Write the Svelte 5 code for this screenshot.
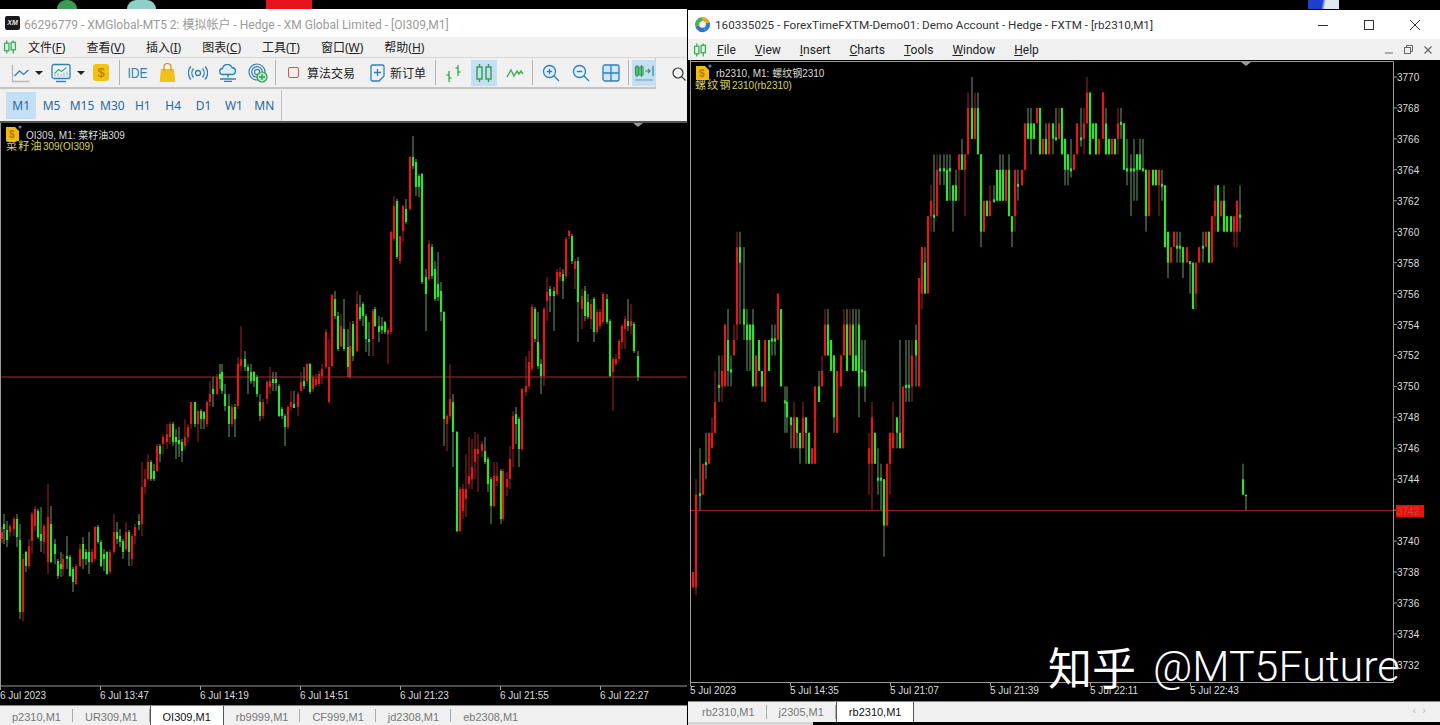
<script>
	// bars: [x, up?, bodyTop, bodyBottom, high, low]; left chart is in page pixels
	const oiBars = [
		[2,1,533,540,528,544],[4,0,525,530,515,545],[7,0,531,541,522,548],[10,1,527,533,525,538],[14,1,520,530,518,537],
		[17,0,520,538,515,548],[20,0,541,613,525,620],[23,1,560,613,555,622],[26,0,553,567,552,573],[29,1,547,567,540,570],
		[32,1,515,542,513,555],[35,1,510,527,507,532],[38,0,512,538,510,540],[41,0,535,542,508,553],[44,1,527,543,525,555],
		[48,1,518,563,485,575],[51,0,525,563,507,564],[55,0,545,555,540,565],[58,0,562,577,560,580],[61,0,565,570,553,578],
		[63,1,560,570,555,577],[67,0,557,560,537,570],[70,0,558,577,556,578],[73,0,570,583,568,593],[76,1,567,585,565,586],
		[80,1,550,567,545,568],[83,0,545,560,538,570],[86,0,553,560,550,566],[89,0,553,563,533,575],[92,1,553,563,550,565],
		[95,1,528,560,527,562],[98,0,528,543,526,545],[101,0,543,567,541,568],[104,0,555,560,550,572],[107,0,553,575,552,576],
		[110,1,553,573,551,575],[114,1,533,553,515,555],[117,0,533,540,523,545],[120,0,537,543,530,548],[123,0,542,553,540,560],
		[126,1,533,550,523,552],[129,0,533,553,531,567],[132,1,537,560,535,567],[135,1,528,537,525,545],[139,0,522,526,515,531],
		[142,1,488,525,463,537],[145,1,480,488,470,495],[148,1,463,480,455,482],[151,0,463,480,461,482],[154,0,472,480,465,482],
		[157,1,447,472,445,473],[160,0,447,455,445,463],[163,1,438,445,435,455],[167,1,435,443,425,450],[170,1,425,438,423,445],
		[173,0,425,443,423,447],[176,0,438,443,430,460],[179,0,441,445,428,458],[182,0,443,452,440,463],[185,1,438,447,420,450],
		[188,1,428,438,425,443],[191,1,403,425,403,430],[195,0,403,425,403,428],[198,1,412,425,410,443],[201,0,412,420,410,430],
		[204,0,413,420,412,430],[207,1,403,425,402,428],[210,1,395,403,382,407],[213,0,390,395,378,408],[217,1,378,395,375,396],
		[220,0,375,380,365,390],[222,0,373,392,365,395],[225,0,395,407,385,412],[229,0,407,425,395,438],[232,1,408,425,405,428],
		[235,0,408,420,405,438],[238,1,365,407,358,410],[241,1,360,367,327,372],[245,0,360,368,352,372],[248,0,368,372,365,395],
		[251,0,373,382,365,385],[254,0,373,382,372,388],[257,0,378,395,376,398],[260,0,403,417,395,422],[263,1,403,417,400,420],
		[267,1,383,400,381,405],[270,1,382,388,368,395],[273,0,380,384,373,392],[276,0,380,384,373,392],[279,0,387,417,385,418],
		[282,0,410,417,408,420],[285,0,417,428,415,447],[288,1,408,428,406,430],[291,1,403,408,392,412],[294,0,405,409,392,409],
		[298,1,395,408,393,417],[301,1,383,392,373,392],[304,0,382,387,368,390],[307,1,365,382,364,385],[310,0,365,393,364,395],
		[313,1,378,390,376,393],[316,1,380,386,375,388],[319,1,375,385,372,387],[322,1,370,377,365,385],[326,1,333,368,330,370],
		[329,1,368,403,340,404],[332,1,296,367,295,368],[335,0,300,317,292,320],[338,0,317,350,313,352],[341,1,327,347,315,348],
		[344,0,330,350,300,352],[348,0,348,368,330,378],[350,1,347,378,323,380],[353,0,325,357,322,362],[357,1,305,352,292,353],
		[360,0,308,320,296,322],[363,0,305,317,303,327],[366,0,317,340,315,353],[369,0,340,343,323,357],[373,1,312,340,310,357],
		[375,0,310,327,308,328],[379,0,327,333,317,343],[382,0,327,331,318,335],[385,0,323,333,322,335],[388,1,331,335,329,365],
		[391,1,233,333,232,335],[394,1,207,240,197,242],[397,0,202,258,200,260],[400,1,237,262,237,265],[403,1,207,232,206,243],
		[406,0,210,223,200,225],[410,1,158,210,157,212],[413,0,158,167,137,170],[416,0,163,188,160,197],[419,0,177,188,175,198],
		[422,0,175,283,174,285],[426,0,278,295,270,332],[429,1,245,280,241,282],[432,0,248,277,245,280],[435,0,270,300,262,302],
		[438,0,285,298,253,302],[441,0,292,313,283,322],[444,0,313,420,312,447],[447,1,417,425,415,452],[450,1,400,417,365,420],
		[453,0,403,433,395,468],[457,0,433,532,432,533],[460,1,490,532,488,533],[463,1,490,512,485,520],[466,1,490,500,455,518],
		[469,1,477,485,438,490],[472,1,468,480,440,490],[475,1,450,463,433,480],[478,1,450,455,435,493],[482,1,445,452,442,458],
		[485,0,452,463,438,465],[488,0,460,485,458,493],[491,0,480,507,478,525],[494,1,477,507,463,508],[497,1,477,482,463,487],
		[501,0,472,520,470,525],[503,1,472,520,470,522],[507,1,480,488,473,497],[510,1,460,480,447,490],[513,1,417,450,412,468],
		[516,0,415,425,408,445],[519,0,420,450,418,468],[522,1,390,450,389,452],[526,1,387,393,357,397],[529,1,363,387,352,390],
		[532,1,308,370,305,372],[535,0,310,340,308,343],[538,0,343,367,313,370],[541,0,365,377,360,395],[544,1,310,377,308,387],
		[547,1,293,302,278,322],[550,0,290,297,287,313],[554,0,292,297,288,332],[557,1,273,295,270,297],[560,1,273,278,268,282],
		[563,0,275,282,270,300],[566,1,240,277,238,280],[569,1,232,237,231,240],[572,0,237,262,235,265],[575,1,262,270,260,290],
		[578,0,262,303,258,343],[582,1,297,310,290,330],[585,0,292,317,287,322],[588,0,303,318,295,320],[591,1,305,320,300,330],
		[594,0,300,333,298,343],[597,1,313,333,310,335],[600,1,313,327,310,330],[603,1,295,323,293,325],[607,0,300,323,295,325],
		[610,0,322,377,320,378],[613,1,360,373,358,412],[616,1,360,365,355,367],[619,1,342,360,340,363],[622,1,327,343,325,350],
		[625,1,320,330,317,350],[628,0,322,327,300,332],[631,1,322,327,305,335],[634,0,325,352,323,354],[638,0,357,378,352,382]
	];

	// right chart moves in whole points, so this one is stored as prices
	const rbPrices = [
		[693,1,3738,3737,3738,3737],[696,1,3743,3737,3744,3736.5],[700,0,3743.1,3742.9,3746,3742],[703,1,3745,3743,3745,3743],
		[706,0,3745.1,3744.9,3747,3744],[709,1,3747,3745,3747,3745],[712,1,3747,3746,3748,3746],[715,1,3749,3747,3751,3747],
		[719,0,3750.1,3749.9,3752,3749],[722,1,3751,3750,3752,3749],[725,1,3754,3750,3754,3750],[728,0,3753,3751,3755,3750],
		[731,0,3751.1,3750.9,3752,3750],[734,1,3753,3752,3754,3752],[737,1,3759,3754,3760,3753],[740,0,3759,3758,3760,3754],
		[744,0,3755,3754,3759,3753],[747,0,3754,3753,3755,3751],[750,0,3754,3753,3754,3751],[753,0,3754,3750,3755,3750],
		[756,1,3752,3750,3752,3750],[759,0,3753,3751,3753,3751],[762,0,3751,3750,3751,3749],[765,1,3753,3749,3753,3749],
		[769,0,3753,3751,3753,3751],[772,0,3753.1,3752.9,3754,3752],[775,0,3753.1,3752.9,3754,3752],[778,1,3756,3753,3756,3753],
		[781,0,3755,3750,3755,3750],[785,0,3749.1,3748.9,3750,3747],[787,0,3749,3748,3750,3747],[791,0,3748,3747.5,3748,3746],
		[794,1,3748,3746,3749,3746],[797,0,3748,3747,3748,3746],[800,0,3747,3746,3747,3745],[803,1,3748,3746,3749,3746],
		[806,0,3748,3747,3748,3745],[809,0,3747,3745,3747,3745],[812,1,3746,3745,3746,3745],[815,1,3750,3745,3750,3745],
		[819,0,3750,3749,3751,3749],[822,1,3751,3750,3752,3750],[825,1,3754,3752,3755,3752],[828,0,3754,3752,3755,3752],
		[831,0,3753,3751,3753,3751],[834,0,3752,3748,3752,3747],[837,1,3751,3747,3751,3747],[841,1,3752,3750,3752,3750],
		[844,1,3754,3752,3755,3752],[847,0,3754,3751,3755,3751],[850,1,3754,3752,3755,3752],[853,0,3754,3751,3755,3751],
		[856,0,3752,3751,3755,3751],[859,0,3754,3750,3755,3748],[862,0,3751.1,3750.9,3753,3750],[865,0,3751,3750,3753,3749],
		[869,1,3746,3745,3747,3743],[872,1,3748,3745,3749,3742],[875,0,3747,3745,3747,3745],[878,0,3744.1,3743.9,3746,3743],
		[881,0,3744.1,3743.9,3745,3742],[884,0,3744,3741,3744,3739],[887,1,3745,3741,3745,3741],[890,1,3747,3745,3747,3743],
		[893,1,3747,3746,3749,3746],[897,0,3748,3747,3748,3746],[900,0,3747,3746,3753,3746],[903,1,3750,3746,3750,3746],
		[906,0,3750.1,3749.9,3753,3749],[909,0,3750.1,3749.9,3753,3749],[912,1,3752,3750,3753,3749],[916,0,3753,3752,3754,3750],
		[919,1,3757,3750,3757,3750],[922,1,3759,3756,3759,3755],[925,0,3758,3756,3759,3756],[928,1,3761,3756,3761,3756],
		[931,1,3762,3761,3763,3760],[934,0,3761.1,3760.9,3765,3760],[937,1,3764,3761,3765,3761],[940,0,3764.1,3763.9,3765,3763],
		[944,0,3764.1,3763.9,3765,3763],[947,0,3764,3762,3765,3762],[950,0,3764.1,3763.9,3765,3762],[953,0,3763,3762,3763,3760],
		[956,0,3763,3762,3764,3762],[959,1,3765,3764,3765,3762],[962,0,3765,3764,3766,3764],[965,1,3765,3764,3765,3761],
		[968,1,3768,3765,3769,3765],[972,0,3768,3766,3770,3766],[975,1,3768,3766,3769,3766],[978,0,3768,3765,3769,3765],
		[981,0,3765,3760,3765,3759],[984,1,3762,3760,3762,3760],[987,0,3762,3761,3762,3761],[990,1,3762,3761,3763,3761],
		[994,0,3762.1,3761.9,3763,3762],[997,0,3764,3762,3764,3762],[1000,0,3764,3762,3765,3762],[1003,0,3764,3762,3765,3762],
		[1006,1,3764,3762,3764,3762],[1009,0,3764,3761,3765,3761],[1012,0,3761,3760,3761,3759],[1015,1,3764,3761,3764,3760],
		[1018,0,3763.1,3762.9,3764,3762],[1022,1,3764,3763,3764,3763],[1025,1,3767,3764,3767,3764],[1028,0,3767,3766,3768,3766],
		[1031,0,3767,3766,3768,3765],[1034,0,3767,3766,3767,3766],[1037,1,3768,3767,3768,3767],[1040,0,3768,3765,3768,3765],
		[1043,1,3766,3765,3766,3765],[1046,0,3766,3765,3767,3765],[1049,1,3767,3765,3767,3765],[1053,0,3767,3766,3767,3765],
		[1056,0,3766.1,3765.9,3768,3766],[1059,1,3767,3766,3768,3766],[1062,0,3768,3765,3768,3765],[1065,0,3766,3764,3766,3763],
		[1068,0,3765,3764,3765,3763],[1071,0,3764.1,3763.9,3766,3763.5],[1074,1,3765,3764,3765,3764],[1077,1,3767,3765,3767,3765],
		[1081,0,3766.1,3765.9,3768,3765.5],[1084,1,3767,3766,3768,3765],[1087,1,3769,3767,3770,3767],[1090,0,3769,3765,3769,3765],
		[1093,0,3767,3766,3767,3766],[1096,0,3767,3765,3767,3765],[1099,1,3766,3765,3766,3765],[1103,1,3769,3766,3769,3766],
		[1106,0,3767,3765,3768,3765],[1109,0,3766,3765,3766,3765],[1112,1,3766,3765,3766,3765],[1115,0,3766,3765,3766,3765],
		[1118,1,3767,3766,3768,3765],[1121,0,3767.1,3766.9,3768,3766],[1124,0,3767,3764,3767,3764],[1127,0,3764.1,3763.9,3766,3763],
		[1131,0,3764.1,3763.9,3765,3761],[1134,0,3764.1,3763.9,3766,3762],[1137,0,3765,3764,3765,3762],[1140,0,3765,3764,3766,3764],
		[1143,0,3764.1,3763.9,3766,3764],[1146,0,3764,3761,3764,3760],[1149,1,3764,3761,3764,3761],[1153,0,3764,3763,3764,3763],
		[1156,0,3764,3763,3764,3763],[1159,1,3764,3763,3764,3761],[1162,0,3763.1,3762.9,3764,3762],[1165,0,3763,3759,3763,3759],
		[1168,0,3760,3758,3760,3757],[1171,1,3759,3758,3759,3758],[1174,1,3760,3759,3760,3759],[1177,0,3759.1,3758.9,3760,3758],
		[1180,0,3759.1,3758.9,3760,3758],[1183,0,3759,3758,3759,3757],[1187,1,3759,3758,3759,3758],[1190,0,3758.1,3757.9,3758,3756],
		[1193,0,3758,3755,3758,3755],[1196,1,3758,3756,3758,3755],[1199,1,3759,3758,3759,3758],[1203,0,3759.1,3758.9,3760,3758],
		[1206,1,3760,3759,3760,3759],[1209,0,3760,3758,3760,3758],[1212,1,3761,3758,3761,3758],[1215,1,3762,3761,3763,3760],
		[1218,0,3763,3760,3763,3760],[1221,1,3762,3761,3762,3761],[1224,0,3762,3760,3763,3760],[1227,0,3761,3760,3761,3760],
		[1231,0,3761,3760,3761,3760],[1234,1,3761,3760,3761,3759],[1237,1,3762,3760,3762,3759],[1240,0,3761.1,3760.9,3763,3760],
		[1243,0,3744,3743,3745,3743],[1246,0,3743,3742.9,3743,3742]
	];

	const priceY = (p) => 77 + (3770 - p) * 15.47;
	const rbBars = rbPrices.map(([x, up, t, b, h, l]) => [x, up, priceY(t), priceY(b), priceY(h), priceY(l)]);
	const priceTicks = [];
	for (let p = 3770; p >= 3732; p -= 2) priceTicks.push(p);

	const oiTimes = ['6 Jul 2023', '6 Jul 13:47', '6 Jul 14:19', '6 Jul 14:51', '6 Jul 21:23', '6 Jul 21:55', '6 Jul 22:27'];
	const rbTimes = ['5 Jul 2023', '5 Jul 14:35', '5 Jul 21:07', '5 Jul 21:39', '5 Jul 22:11', '5 Jul 22:43'];

	const frames = ['M1', 'M5', 'M15', 'M30', 'H1', 'H4', 'D1', 'W1', 'MN'];
	const cnMenu = [['文件', 'F'], ['查看', 'V'], ['插入', 'I'], ['图表', 'C'], ['工具', 'T'], ['窗口', 'W'], ['帮助', 'H']];
	const enMenu = [['F', 'ile'], ['V', 'iew'], ['I', 'nsert'], ['C', 'harts'], ['T', 'ools'], ['W', 'indow'], ['H', 'elp']];
	const leftTabs = ['p2310,M1', 'UR309,M1', 'OI309,M1', 'rb9999,M1', 'CF999,M1', 'jd2308,M1', 'eb2308,M1'];
	const rightTabs = ['rb2310,M1', 'j2305,M1', 'rb2310,M1'];
</script>

{#snippet candles(bars)}
	{#each bars as [x, up, top, bottom, high, low]}
		<line x1={x} x2={x} y1={high} y2={low} class={up ? 'wick-up' : 'wick-down'} />
		<rect x={x - 1.1} y={top} width="2.2" height={Math.max(bottom - top, 1)} class={up ? 'body-up' : 'body-down'} />
	{/each}
{/snippet}

{#snippet coin(x, y)}
	<path d="M{x} {y + 1}h9l4 4v10h-13z" fill="#f2b90f" />
	<text x={x + 3} y={y + 12} class="coin">$</text>
	<circle cx={x + 14} cy={y + 1} r="1.5" fill="#3b8fd8" />
{/snippet}

{#snippet candleLogo()}
	<svg width="14" height="16" viewBox="0 0 15 16" fill="none" stroke="#3fae5a" stroke-width="1.4">
		<path d="M4 1v14M11 1v14" />
		<rect x="1.7" y="4" width="4.6" height="8" fill="#dff3e3" />
		<rect x="8.7" y="3" width="4.6" height="8" fill="#dff3e3" />
	</svg>
{/snippet}

<div class="desktop">
	<span class="peek green"></span>
	<span class="peek teal"></span>
	<span class="peek red"></span>
	<span class="peek blue"></span>

	<section class="window left">
		<header class="title inactive">
			<span class="xm">XM</span>
			<span>66296779 - XMGlobal-MT5 2: 模拟帐户 - Hedge - XM Global Limited - [OI309,M1]</span>
		</header>

		<nav class="menu cn">
			<span class="menu-logo">{@render candleLogo()}</span>
			{#each cnMenu as [label, key]}
				<span class="menu-item">{label}(<u>{key}</u>)</span>
			{/each}
		</nav>

		<div class="tool-row">
			<div class="toolbar">
				<span class="tb first">
					<svg width="20" height="20" viewBox="0 0 20 20" fill="none">
						<path d="M1.5 2v16.5h17" stroke="#b9b9b9" stroke-width="1.3" />
						<path d="M3.5 13l5-5 4 3.5 5-4.5" stroke="#2f7fb5" stroke-width="1.3" />
					</svg>
				</span>
				<span class="caret c1"></span>
				<span class="tb chart-btn">
					<svg width="20" height="20" viewBox="0 0 20 20" fill="none">
						<rect x="1" y="1.5" width="18" height="14" rx="2" stroke="#2f7fb5" stroke-width="1.3" fill="#eaf4fa" />
						<path d="M3.5 10.5l4-4 3 2 5-4" stroke="#3fae5a" stroke-width="1.1" />
						<path d="M4 13.5v-2M7 13.5v-3.5M10 13.5v-2.5M13 13.5v-4M16 13.5v-5" stroke="#9cb9cb" stroke-width="1.2" />
						<path d="M5 18.5h10" stroke="#2f7fb5" stroke-width="1.4" />
					</svg>
				</span>
				<span class="caret c2"></span>
				<span class="tb first dollar-wrap"><span class="dollar">$</span></span>
				<span class="sep s1"></span>
				<span class="tb ide">IDE</span>
				<span class="tb">
					<svg width="17" height="20" viewBox="0 0 17 20">
						<path d="M2 6h13l1.300 13h-15.600z" fill="#f2c218" />
						<path d="M5 8V4a3.500 3.500 0 0 1 7 0v4" fill="none" stroke="#c99a08" stroke-width="1.200" />
					</svg>
				</span>
				<span class="tb">
					<svg width="20" height="16" viewBox="0 0 20 16" fill="none" stroke="#2f7fb5" stroke-width="1.300">
						<circle cx="10" cy="8" r="2.500" />
						<path d="M5.500 3.500a7 7 0 0 0 0 9M14.500 3.500a7 7 0 0 1 0 9M2.800 1.500a10 10 0 0 0 0 13M17.200 1.500a10 10 0 0 1 0 13" />
					</svg>
				</span>
				<span class="tb">
					<svg width="20" height="18" viewBox="0 0 20 18" fill="none" stroke="#2f7fb5" stroke-width="1.300">
						<path d="M5 10.500a3 3 0 0 1-.500-6 5 5 0 0 1 9.500-1 3.600 3.600 0 0 1 1 7z" fill="#d9eef9" />
						<path d="M10 10.500v3M2 15h16M6 17.300h8" />
					</svg>
				</span>
				<span class="tb">
					<svg width="20" height="20" viewBox="0 0 20 20" fill="none">
						<circle cx="9" cy="9" r="8" stroke="#2f7fb5" stroke-width="1.200" />
						<circle cx="9" cy="9" r="5.300" stroke="#2f7fb5" stroke-width="1.200" />
						<circle cx="9" cy="9" r="2.600" stroke="#2f7fb5" stroke-width="1.200" />
						<circle cx="14" cy="14" r="5" fill="#bfe8c6" stroke="#2f9e4f" stroke-width="1.200" />
						<path d="M14 11v6M11 14h6" stroke="#2f9e4f" stroke-width="1.300" />
					</svg>
				</span>
				<span class="sep"></span>
				<span class="tb labelled algo"><i class="check"></i>算法交易</span>
				<span class="tb labelled order">
					<svg width="15" height="18" viewBox="0 0 15 18" fill="none" stroke="#2f7fb5" stroke-width="1.300">
						<path d="M2.500 1h10a1.500 1.500 0 0 1 1.500 1.500V12l-5 5H2.500A1.500 1.500 0 0 1 1 15.500v-13A1.500 1.500 0 0 1 2.500 1z" />
						<path d="M7.500 5v7M4 8.500h7" />
					</svg>
					新订单
				</span>
				<span class="sep"></span>
				<span class="tb">
					<svg width="18" height="20" viewBox="0 0 18 20" fill="none" stroke="#3fae5a" stroke-width="1.400">
						<path d="M4 8v11M1.500 12H4M4 15h2.500M13 2v11M10.500 5H13M13 9h2.500" />
					</svg>
				</span>
				<span class="tb on candles">
					<svg width="18" height="20" viewBox="0 0 18 20" fill="none" stroke="#2f9e4f" stroke-width="1.400">
						<path d="M4.500 1v18M13.500 1v18" />
						<rect x="2" y="4" width="5" height="12" fill="#c4dff3" />
						<rect x="11" y="4" width="5" height="12" fill="#c4dff3" />
					</svg>
				</span>
				<span class="tb">
					<svg width="18" height="12" viewBox="0 0 18 12" fill="none" stroke="#3fae5a" stroke-width="1.400">
						<path d="M1 10l4-7 3 6 3-5 2 3 2-3 2 3" />
					</svg>
				</span>
				<span class="sep"></span>
				<span class="tb">
					<svg width="18" height="18" viewBox="0 0 18 18" fill="none" stroke="#2f7fb5" stroke-width="1.300">
						<circle cx="7.500" cy="7.500" r="6" fill="#e4f1fa" />
						<path d="M11.800 11.800L17 17M7.500 4.800v5.400M4.800 7.500h5.400" />
					</svg>
				</span>
				<span class="tb">
					<svg width="18" height="18" viewBox="0 0 18 18" fill="none" stroke="#2f7fb5" stroke-width="1.300">
						<circle cx="7.500" cy="7.500" r="6" fill="#e4f1fa" />
						<path d="M11.800 11.800L17 17M4.800 7.500h5.400" />
					</svg>
				</span>
				<span class="tb">
					<svg width="18" height="18" viewBox="0 0 18 18" fill="#cfe6f6" stroke="#2f7fb5" stroke-width="1.300">
						<rect x="1" y="1" width="16" height="16" rx="2" />
						<path d="M9 1v16M1 9h16" />
					</svg>
				</span>
				<span class="sep"></span>
				<span class="tb on auto">
					<svg width="20" height="18" viewBox="0 0 20 18" fill="none" stroke-width="1.200">
						<path d="M3 1v12M7.500 1v12" stroke="#2f9e4f" />
						<rect x="1.500" y="3" width="3" height="8" stroke="#2f9e4f" />
						<rect x="6" y="3" width="3" height="8" stroke="#2f9e4f" />
						<path d="M11 7h5M14 5l2 2-2 2" stroke="#2f9e4f" />
						<path d="M19 2v10" stroke="#2f7fb5" />
						<path d="M1 16h18" stroke="#8fb3cc" stroke-width="1.600" />
					</svg>
				</span>
			</div>
			<svg class="search" width="14" height="14" viewBox="0 0 14 14" fill="none" stroke="#333" stroke-width="1.200">
				<circle cx="6" cy="6" r="5" />
				<path d="M9.600 9.600L13.500 13.500" />
			</svg>
		</div>

		<div class="frames">
			{#each frames as frame, i}
				<span class="frame" class:on={i === 0}>{frame}</span>
			{/each}
		</div>

		<svg class="chart" width="687" height="582" viewBox="0 124 687 582">
			<path d="M0.500 124V687H687" class="axis" />
			<path d="M633 124h10l-5 4z" fill="#9a9a9a" />
			<line x1="1" x2="687" y1="378" y2="378" class="level" />
			{@render candles(oiBars)}
			{#each oiTimes as time, i}
				<line x1={i * 100 + 0.5} x2={i * 100 + 0.5} y1="687" y2="691" class="axis" />
				<text x={i * 100} y="700" class="tick">{time}</text>
			{/each}
			{@render coin(6, 127)}
			<text x="26" y="140" class="tick">OI309, M1:  菜籽油309</text>
			<text x="6" y="151" class="name">菜籽油<tspan class="name-code">309(OI309)</tspan></text>
		</svg>

		<div class="tabs">
			{#each leftTabs as tab, i}
				<span class="tab" class:on={i === 2}>{tab}</span>
			{/each}
		</div>
	</section>

	<div class="right-col">
		<section class="window right">
			<header class="title">
				<svg class="mt5" width="17" height="17" viewBox="0 0 17 17">
					<path d="M8.500 1a7.500 7.500 0 0 1 7 5L8.500 8.500z" fill="#e7a823" />
					<path d="M15.500 6a7.500 7.500 0 0 1-4 9.600L8.500 8.500z" fill="#2f7fd0" />
					<path d="M11.500 15.600A7.500 7.500 0 0 1 1.300 10.500L8.500 8.500z" fill="#3b6fc0" />
					<path d="M1.300 10.500A7.500 7.500 0 0 1 8.500 1v7.500z" fill="#4fae4a" />
					<circle cx="8.500" cy="8.500" r="3.300" fill="#f4f4f4" />
				</svg>
				<span>160335025 - ForexTimeFXTM-Demo01: Demo Account - Hedge - FXTM - [rb2310,M1]</span>
				<span class="win-btns">
					<svg width="10" height="10" viewBox="0 0 10 10" stroke="#333" fill="none"><path d="M0 5.500h10" /></svg>
					<svg width="10" height="10" viewBox="0 0 10 10" stroke="#333" fill="none"><rect x=".5" y=".5" width="9" height="9" /></svg>
					<svg width="10" height="10" viewBox="0 0 10 10" stroke="#333" fill="none"><path d="M0 0l10 10M10 0L0 10" /></svg>
				</span>
			</header>

			<nav class="menu en">
				<span class="menu-logo">{@render candleLogo()}</span>
				{#each enMenu as [key, rest]}
					<span class="menu-item"><u>{key}</u>{rest}</span>
				{/each}
				<span class="mdi">
					<svg width="8" height="8" viewBox="0 0 8 8" stroke="#666" fill="none"><path d="M0 7h8" /></svg>
					<svg width="9" height="9" viewBox="0 0 9 9" stroke="#666" fill="none"><rect x=".5" y="2.500" width="6" height="6" /><path d="M2.500 2.500V.5h6v6h-2" /></svg>
					<svg width="8" height="8" viewBox="0 0 8 8" stroke="#666" stroke-width="1.300" fill="none"><path d="M.5.5l7 7M7.500.5l-7 7" /></svg>
				</span>
			</nav>

			<div class="chart-wrap">
				<svg class="chart" width="750" height="641" viewBox="690 60 750 641">
					<path d="M690.500 60V682.500H1393.500V61.500H690.500" class="axis" />
					<path d="M1241 62h10l-5 4z" fill="#9a9a9a" />
					<line x1="691" x2="1393" y1="510.700" y2="510.700" class="level" />
					{@render candles(rbBars)}
					{#each priceTicks as p}
						<line x1="1393" x2="1397" y1={priceY(p)} y2={priceY(p)} class="axis" />
						<text x="1397" y={priceY(p) + 4} class="tick">{p}</text>
					{/each}
					<rect x="1396" y="505" width="28" height="12" fill="#e8110f" />
					<text x="1397" y="515" class="tick now">3742</text>
					{#each rbTimes as time, i}
						<line x1={i * 100 + 690.500} x2={i * 100 + 690.500} y1="682" y2="686" class="axis" />
						<text x={i * 100 + 690} y="694" class="tick">{time}</text>
					{/each}
					{@render coin(696, 65)}
					<text x="716" y="77" class="tick">rb2310, M1:  螺纹钢2310</text>
					<text x="695" y="89" class="name">螺纹钢<tspan class="name-code">2310(rb2310)</tspan></text>
				</svg>
				<div class="watermark"><span class="zh">知乎</span><span class="at">@MT5Future</span></div>
			</div>

			<div class="tabs">
				{#each rightTabs as tab, i}
					<span class="tab" class:on={i === 2}>{tab}</span>
				{/each}
				<span class="arrows">‹ &nbsp;›</span>
			</div>
		</section>
		<div class="under"></div>
	</div>
</div>

<style>
	:global(body) {
		background: #000;
	}
	.desktop {
		position: relative;
		width: 1440px;
		height: 725px;
		overflow: hidden;
		display: flex;
		gap: 1px;
		background: #000;
		font-family: "Noto Sans", "Noto Sans CJK SC", sans-serif;
	}

	/* bits of desktop icons above the windows */
	.peek {
		position: absolute;
		top: 0;
		height: 9px;
	}
	.peek.green {
		left: 57px;
		width: 20px;
		background: #3d9a56;
		border-radius: 10px 10px 0 0;
	}
	.peek.teal {
		left: 127px;
		width: 29px;
		background: #8fcfc4;
		border-radius: 14px 14px 0 0;
	}
	.peek.red {
		left: 266px;
		width: 46px;
		background: #e8141c;
	}
	.peek.blue {
		left: 1308px;
		width: 31px;
		background: linear-gradient(100deg, #1c3fd0 45%, #dfe7f2 55%);
	}

	.window {
		display: flex;
		flex-direction: column;
		background: #f0f0f0;
	}
	.window.left {
		width: 687px;
		height: 716px;
		margin-top: 9px;
	}
	.right-col {
		width: 752px;
		margin-top: 10px;
		display: flex;
		flex-direction: column;
	}
	.window.right {
		height: 712px;
	}
	.under {
		width: 125px;
		height: 3px;
		background: #d6d6d6;
	}

	.title {
		background: #fff;
		display: flex;
		align-items: center;
		font: 11.700px Roboto, "Noto Sans CJK SC", sans-serif;
		color: #333;
		flex: none;
	}
	.left .title {
		height: 28px;
		padding-left: 5px;
		gap: 4px;
		font-size: 12px;
	}
	.right .title {
		height: 29px;
		padding-left: 6px;
		gap: 4px;
	}
	.title.inactive {
		color: #9a9a9a;
	}
	.xm {
		width: 15px;
		height: 14px;
		background: #1a1a1a;
		border-radius: 2px;
		color: #e8e8e8;
		font: italic bold 7px "Liberation Sans", sans-serif;
		text-align: center;
		line-height: 14px;
	}
	.win-btns {
		margin-left: auto;
		display: flex;
		gap: 36px;
		padding-right: 20px;
	}

	.menu {
		display: flex;
		align-items: center;
		font-size: 12px;
		color: #222;
		flex: none;
		position: relative;
	}
	.menu.cn {
		height: 20px;
		padding-left: 3px;
		gap: 21px;
	}
	.menu.cn .menu-logo {
		margin-right: -10px;
		width: 14px;
		display: flex;
	}
	.menu.en {
		height: 21px;
		padding-left: 5px;
		gap: 19px;
		font-family: Roboto, sans-serif;
	}
	.menu.en .menu-logo {
		margin-right: -9px;
		display: flex;
	}
	.menu-item u {
		text-underline-offset: 1px;
	}
	.mdi {
		margin-left: auto;
		display: flex;
		align-items: center;
		gap: 11px;
		padding-right: 8px;
	}

	.tool-row {
		height: 32px;
		display: flex;
		align-items: center;
		flex: none;
		border-top: 1px solid #d8d8d8;
		box-sizing: border-box;
	}
	.toolbar {
		width: 656px;
		height: 31px;
		box-sizing: border-box;
		padding-left: 10px;
		display: flex;
		align-items: center;
		gap: 5px;
		border-bottom: 2px solid #c4c4c4;
		border-right: 1px solid #c4c4c4;
	}
	.tb {
		width: 25px;
		height: 26px;
		display: flex;
		align-items: center;
		justify-content: center;
		flex: none;
	}
	.tb.first,
	.tb.chart-btn {
		width: 22px;
	}
	.tb.chart-btn {
		margin-left: 2px;
	}
	.tb.labelled {
		font-size: 12px;
		color: #222;
		justify-content: flex-start;
	}
	.tb.algo {
		width: 78px;
		padding-left: 7px;
		box-sizing: border-box;
		gap: 8px;
	}
	.tb.order {
		width: 66px;
		padding-left: 6px;
		box-sizing: border-box;
		gap: 5px;
	}
	.tb.on {
		background: #c4dff3;
	}
	.tb.candles {
		width: 26px;
	}
	.tb.auto {
		width: 24px;
		margin-left: -2px;
	}
	.caret {
		width: 0;
		height: 0;
		flex: none;
		border-left: 4px solid transparent;
		border-right: 4px solid transparent;
		border-top: 4px solid #222;
	}
	.caret.c1 {
		margin-left: -2px;
	}
	.dollar {
		width: 16px;
		height: 17px;
		border-radius: 3px;
		background: #f4c20d;
		color: #a87a00;
		font: 13px/17px "Liberation Sans", sans-serif;
		text-align: center;
	}
	.sep {
		width: 1px;
		height: 25px;
		background: #b4b4b4;
		flex: none;
	}
	.sep.s1 {
		margin-left: 2px;
	}
	.ide {
		font: 14px "Liberation Sans Narrow", "Liberation Sans", sans-serif;
		color: #2f7fb5;
		transform: scaleX(0.86);
	}
	.check {
		width: 9px;
		height: 9px;
		border: 1px solid #d9534f;
		border-radius: 2px;
		background: #fbeeee;
	}
	.search {
		margin-left: 16px;
	}

	.frames {
		height: 32px;
		padding-left: 6px;
		display: flex;
		align-items: center;
		flex: none;
		border-bottom: 2px solid #555;
	}
	.frames .frame {
		width: 30.400px;
		height: 27px;
		display: flex;
		align-items: center;
		justify-content: center;
		font-size: 12px;
		color: #2a6a9a;
	}
	.frame.on {
		background: #c4dff3;
	}
	.frames::after {
		content: "";
		width: 1px;
		height: 31px;
		margin-left: 1px;
		background: #c4c4c4;
	}

	.chart {
		display: block;
		flex: none;
		background: #000;
	}
	.axis {
		fill: none;
		stroke: #9a9a9a;
		stroke-width: 1;
	}
	.level {
		stroke: #a82a2a;
		stroke-width: 1;
	}
	.wick-up {
		stroke: #a82222;
		stroke-width: 1;
	}
	.wick-down {
		stroke: #689f68;
		stroke-width: 1;
	}
	.body-up {
		fill: #e51818;
	}
	.body-down {
		fill: #2fe32f;
	}
	.tick {
		font: 10px "Liberation Sans", "Noto Sans CJK SC", sans-serif;
		fill: #dcdcdc;
	}
	.tick.now {
		fill: #c24a3c;
	}
	.name {
		font: 11px "Liberation Sans", "Noto Sans CJK SC", sans-serif;
		letter-spacing: 1.300px;
		fill: #d8d060;
	}
	.name-code {
		font-size: 10px;
		letter-spacing: 0;
	}
	.coin {
		font: bold 10px "Liberation Sans", sans-serif;
		fill: #b07c00;
	}

	.tabs {
		flex: 1;
		display: flex;
		align-items: stretch;
		font: 11px "Liberation Sans", sans-serif;
		color: #777;
		border-top: 1px solid #888;
		box-sizing: border-box;
		overflow: hidden;
	}
	.right .tabs {
		padding-left: 2px;
	}
	.tab {
		padding: 3px 12px 0;
		position: relative;
		line-height: 17px;
		white-space: nowrap;
	}
	.right .tab {
		padding-top: 2px;
	}
	.tab:not(.on):not(:nth-last-child(1))::after {
		content: "";
		position: absolute;
		right: 0;
		top: 3px;
		bottom: 3px;
		width: 1px;
		background: #aaa;
	}
	.tab.on {
		background: #fff;
		color: #111;
		border-right: 1px solid #555;
		border-left: 1px solid #555;
	}
	.arrows {
		margin-left: auto;
		padding: 2px 14px 0 0;
		color: #bbb;
	}

	.chart-wrap {
		position: relative;
		padding-left: 2px;
		flex: none;
		background: #000;
		border-right: 0;
	}
	.watermark {
		position: absolute;
		left: 360px;
		top: 574px;
		display: flex;
		align-items: center;
		gap: 17px;
		color: #fff;
		white-space: nowrap;
	}
	.watermark .zh {
		font: 44px "Noto Sans CJK SC", sans-serif;
	}
	.watermark .at {
		font: 300 43px Roboto, sans-serif;
	}
</style>
